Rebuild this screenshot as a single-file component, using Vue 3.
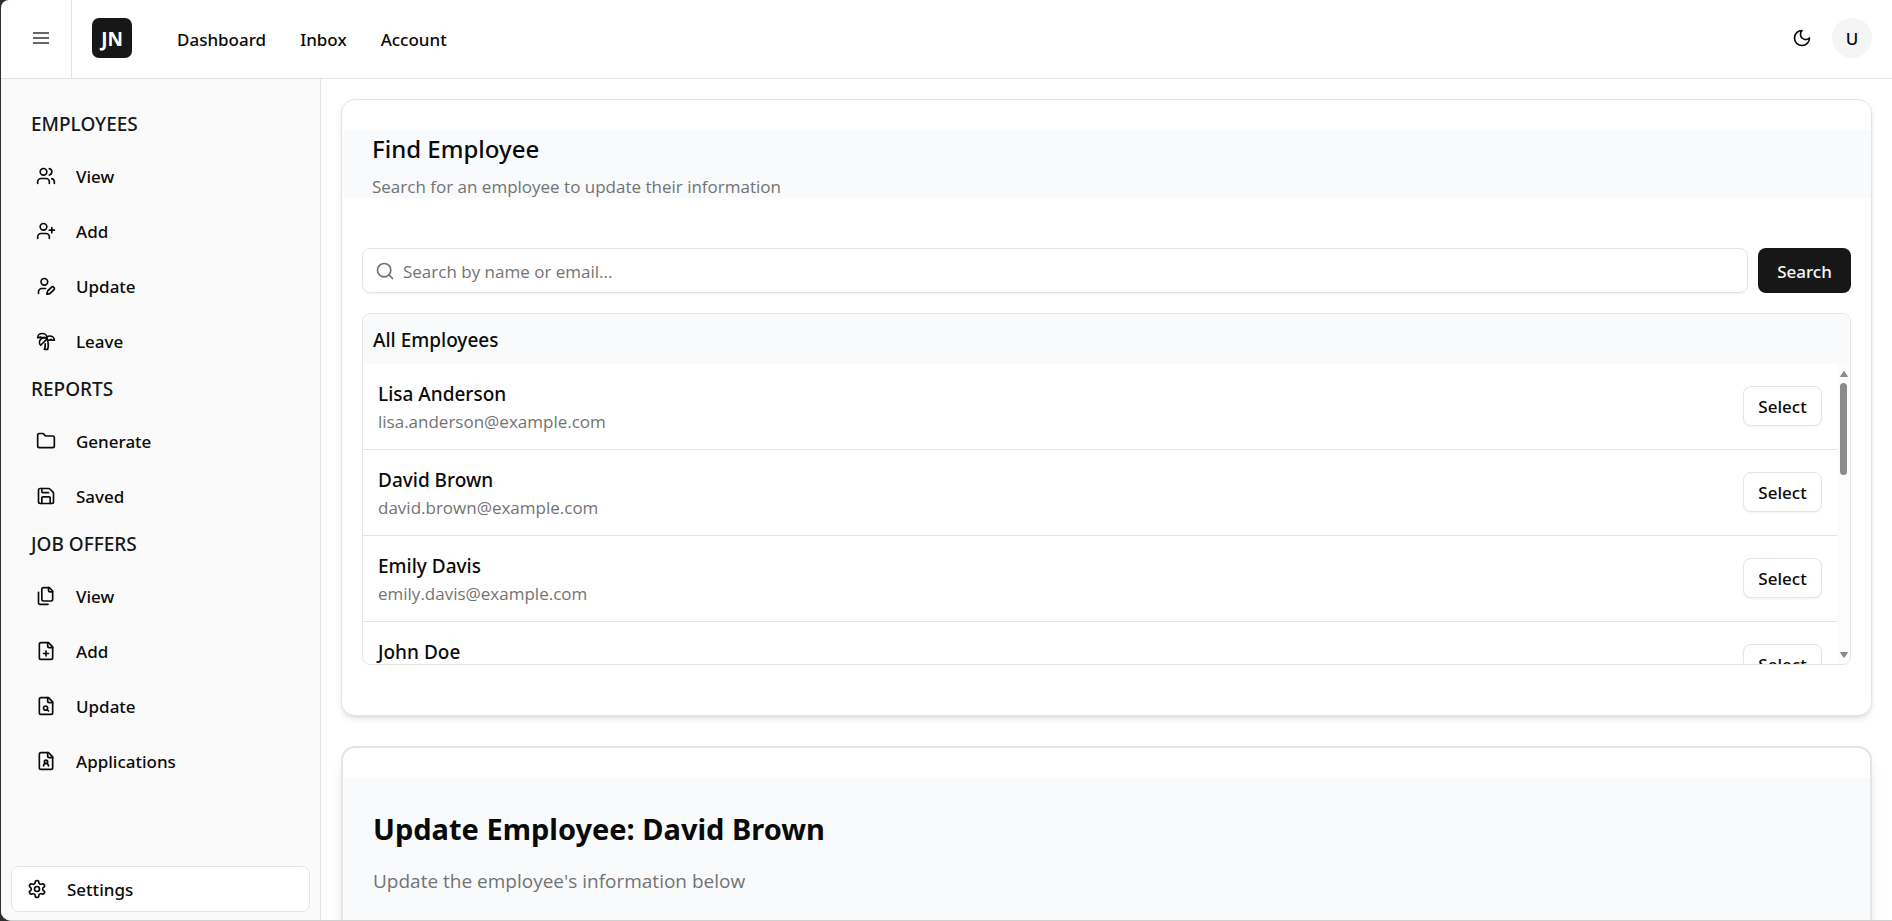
<script setup>
import { ref } from 'vue'

const query = ref('')

const navLinks = ['Dashboard', 'Inbox', 'Account']

const page = [
  'M15 2H6a2 2 0 0 0-2 2v16a2 2 0 0 0 2 2h12a2 2 0 0 0 2-2V7Z',
  'M14 2v4a2 2 0 0 0 2 2h4',
]

const groups = [
  {
    title: 'EMPLOYEES',
    items: [
      {
        label: 'View',
        paths: [
          'M16 21v-2a4 4 0 0 0-4-4H6a4 4 0 0 0-4 4v2',
          'M5 7a4 4 0 1 0 8 0a4 4 0 1 0-8 0',
          'M22 21v-2a4 4 0 0 0-3-3.87',
          'M16 3.13a4 4 0 0 1 0 7.75',
        ],
      },
      {
        label: 'Add',
        paths: [
          'M16 21v-2a4 4 0 0 0-4-4H6a4 4 0 0 0-4 4v2',
          'M5 7a4 4 0 1 0 8 0a4 4 0 1 0-8 0',
          'M19 8v6',
          'M22 11h-6',
        ],
      },
      {
        label: 'Update',
        paths: [
          'M11.5 15H7a4 4 0 0 0-4 4v2',
          'M21.378 16.626a1 1 0 0 0-3.004-3.004l-4.01 4.012a2 2 0 0 0-.506.854l-.837 2.87a.5.5 0 0 0 .62.62l2.87-.837a2 2 0 0 0 .854-.506z',
          'M6 7a4 4 0 1 0 8 0a4 4 0 1 0-8 0',
        ],
      },
      {
        label: 'Leave',
        paths: [
          'M13 8c0-2.76-2.46-5-5.5-5S2 5.24 2 8h2l1-1 1 1h4',
          'M13 7.14A5.82 5.82 0 0 1 16.5 6c3.04 0 5.5 2.24 5.5 5h-3l-1-1-1 1h-3',
          'M5.89 9.71c-2.15 2.15-2.3 5.47-.35 7.43l4.24-4.25.7-.7.71-.71 2.12-2.12c-1.95-1.96-5.27-1.8-7.42.35',
          'M11 15.5c.5 2.5-.17 4.5-1 6.5h4c2-5.5-.5-12-1-14',
        ],
      },
    ],
  },
  {
    title: 'REPORTS',
    items: [
      {
        label: 'Generate',
        paths: [
          'M20 20a2 2 0 0 0 2-2V8a2 2 0 0 0-2-2h-7.900a2 2 0 0 1-1.690-.900L9.600 3.900A2 2 0 0 0 7.930 3H4a2 2 0 0 0-2 2v13a2 2 0 0 0 2 2Z',
        ],
      },
      {
        label: 'Saved',
        paths: [
          'M15.200 3a2 2 0 0 1 1.400.600l3.800 3.800a2 2 0 0 1 .600 1.400V19a2 2 0 0 1-2 2H5a2 2 0 0 1-2-2V5a2 2 0 0 1 2-2z',
          'M17 21v-7a1 1 0 0 0-1-1H8a1 1 0 0 0-1 1v7',
          'M7 3v4a1 1 0 0 0 1 1h7',
        ],
      },
    ],
  },
  {
    title: 'JOB OFFERS',
    items: [
      {
        label: 'View',
        paths: [
          'M20 7h-3a2 2 0 0 1-2-2V2',
          'M9 18a2 2 0 0 1-2-2V4a2 2 0 0 1 2-2h7l4 4v10a2 2 0 0 1-2 2Z',
          'M3 7.600v12.800A1.600 1.600 0 0 0 4.600 22h9.800',
        ],
      },
      { label: 'Add', paths: [...page, 'M9 15h6', 'M12 18v-6'] },
      {
        label: 'Update',
        paths: [...page, 'M9 14.500a2.500 2.500 0 1 0 5 0a2.500 2.500 0 1 0-5 0', 'M13.300 16.300L15 18'],
      },
      {
        label: 'Applications',
        paths: [...page, 'M10 13a2 2 0 1 0 4 0a2 2 0 1 0-4 0', 'M15 18a3 3 0 1 0-6 0'],
      },
    ],
  },
]

const employees = [
  { name: 'Lisa Anderson', email: 'lisa.anderson@example.com' },
  { name: 'David Brown', email: 'david.brown@example.com' },
  { name: 'Emily Davis', email: 'emily.davis@example.com' },
  { name: 'John Doe', email: 'john.doe@example.com' },
]
</script>

<template>
  <div class="shell">
    <header class="topbar">
      <button class="menu" type="button" aria-label="Toggle menu">
        <svg class="icon" viewBox="0 0 20 20"><path d="M2 5h16M2 10h16M2 15h16" /></svg>
      </button>
      <a class="logo" href="#">JN</a>
      <nav class="links">
        <a v-for="link in navLinks" :key="link" href="#">{{ link }}</a>
      </nav>
      <button class="theme" type="button" aria-label="Toggle theme">
        <svg class="icon" viewBox="0 0 24 24"><path d="M12 3a6 6 0 0 0 9 9 9 9 0 1 1-9-9Z" /></svg>
      </button>
      <button class="avatar" type="button">U</button>
    </header>

    <div class="body">
      <aside class="sidebar">
        <nav>
          <section v-for="group in groups" :key="group.title">
            <h2 class="group-title">{{ group.title }}</h2>
            <a v-for="item in group.items" :key="item.label" class="item" href="#">
              <svg class="icon" viewBox="0 0 24 24">
                <path v-for="d in item.paths" :key="d" :d="d" />
              </svg>
              <span>{{ item.label }}</span>
            </a>
          </section>
        </nav>
        <a class="settings" href="#">
          <svg class="icon" viewBox="0 0 24 24">
            <path d="M12.220 2h-.440a2 2 0 0 0-2 2v.180a2 2 0 0 1-1 1.730l-.430.250a2 2 0 0 1-2 0l-.150-.080a2 2 0 0 0-2.730.730l-.220.380a2 2 0 0 0 .730 2.730l.150.100a2 2 0 0 1 1 1.720v.510a2 2 0 0 1-1 1.740l-.150.090a2 2 0 0 0-.730 2.730l.220.380a2 2 0 0 0 2.730.730l.150-.080a2 2 0 0 1 2 0l.430.250a2 2 0 0 1 1 1.730V20a2 2 0 0 0 2 2h.440a2 2 0 0 0 2-2v-.180a2 2 0 0 1 1-1.730l.430-.250a2 2 0 0 1 2 0l.150.080a2 2 0 0 0 2.730-.730l.220-.390a2 2 0 0 0-.730-2.730l-.150-.080a2 2 0 0 1-1-1.740v-.500a2 2 0 0 1 1-1.740l.150-.090a2 2 0 0 0 .730-2.730l-.220-.380a2 2 0 0 0-2.730-.730l-.150.080a2 2 0 0 1-2 0l-.430-.250a2 2 0 0 1-1-1.730V4a2 2 0 0 0-2-2z" />
            <circle cx="12" cy="12" r="3" />
          </svg>
          <span>Settings</span>
        </a>
      </aside>

      <main class="content">
        <section class="card">
          <div class="card-head">
            <h1 class="find-title">Find Employee</h1>
            <p class="find-sub">Search for an employee to update their information</p>
          </div>
          <div class="card-body">
            <form class="search" @submit.prevent>
              <label class="field">
                <svg class="icon" viewBox="0 0 24 24">
                  <circle cx="11" cy="11" r="8" />
                  <path d="m21 21-4.300-4.300" />
                </svg>
                <input v-model="query" type="text" aria-label="Search employees" placeholder="Search by name or email..." />
              </label>
              <button class="primary" type="submit">Search</button>
            </form>
            <div class="list">
              <h2 class="list-title">All Employees</h2>
              <div class="viewport">
                <ul class="rows">
                  <li v-for="person in employees" :key="person.email" class="row">
                    <div>
                      <div class="name">{{ person.name }}</div>
                      <div class="email">{{ person.email }}</div>
                    </div>
                    <button class="select" type="button">Select</button>
                  </li>
                </ul>
                <div class="scrollbar" aria-hidden="true">
                  <svg class="arrow" viewBox="0 0 8 6"><path d="M4 0.500 7.500 5.500H0.500Z" /></svg>
                  <div class="thumb"></div>
                  <svg class="arrow end" viewBox="0 0 8 6"><path d="M4 5.500 7.500 0.500H0.500Z" /></svg>
                </div>
              </div>
            </div>
          </div>
        </section>

        <section class="card update">
          <div class="update-head">
            <h1 class="update-title">Update Employee: David Brown</h1>
            <p class="update-sub">Update the employee's information below</p>
          </div>
        </section>
      </main>
    </div>
  </div>
</template>

<style>
body {
  margin: 0;
  background: #2f2f31;
}
</style>

<style scoped>
* {
  box-sizing: border-box;
}
.shell {
  height: 100vh;
  margin-left: 1px;
  display: flex;
  flex-direction: column;
  overflow: hidden;
  background: #fff;
  border-bottom: 1px solid #cfcfcf;
  border-radius: 8px 0 0 10px;
  color: #0a0a0a;
  font-family: "Noto Sans", "Open Sans", sans-serif;
  font-size: 17px;
  line-height: 26px;
}
h1, h2, p, ul {
  margin: 0;
  padding: 0;
  font-weight: 500;
}
a {
  color: inherit;
  text-decoration: none;
}
button {
  font: inherit;
  color: inherit;
  border: 0;
  padding: 0;
  background: none;
}
.icon {
  flex: none;
  width: 20px;
  height: 20px;
  fill: none;
  stroke: currentColor;
  stroke-width: 2;
  stroke-linecap: round;
  stroke-linejoin: round;
}

.topbar {
  flex: none;
  height: 79px;
  display: flex;
  align-items: center;
  padding: 0 20px 2px 0;
  border-bottom: 1px solid #e5e5e5;
  font-weight: 500;
}
.menu {
  width: 71px;
  height: 78px;
  margin-bottom: -2px;
  padding: 0 12px 2px 22px;
  display: flex;
  align-items: center;
  justify-content: center;
  border-right: 1px solid #e5e5e5;
  color: #666;
}
.menu .icon {
  stroke-linecap: butt;
}
.logo {
  width: 40px;
  height: 40px;
  margin-left: 20px;
  border-radius: 7px;
  background: #171717;
  color: #fff;
  font-size: 19px;
  font-weight: 700;
  line-height: 42px;
  text-align: center;
}
.links {
  display: flex;
  gap: 34px;
  margin-left: 45px;
  padding-top: 3px;
  flex: 1;
}
.theme {
  display: flex;
  margin-right: 20px;
}
.avatar {
  width: 40px;
  height: 40px;
  padding-top: 2px;
  border-radius: 50%;
  background: #f5f5f5;
}

.body {
  flex: 1;
  min-height: 0;
  display: flex;
}
.sidebar {
  flex: none;
  width: 320px;
  display: flex;
  flex-direction: column;
  justify-content: space-between;
  padding: 24px 10px 8px;
  border-right: 1px solid #e5e5e5;
  background: #fafafa;
  font-weight: 500;
}
.group-title {
  height: 45px;
  padding-left: 20px;
  font-size: 19px;
  line-height: 42px;
  color: #171717;
}
.item {
  display: flex;
  align-items: center;
  gap: 20px;
  height: 55px;
  padding-left: 25px;
}
.item span,
.settings span {
  padding-top: 2px;
}
.settings {
  display: flex;
  align-items: center;
  gap: 20px;
  height: 46px;
  padding-left: 15px;
  background: #fff;
  border: 1px solid #e5e5e5;
  border-radius: 8px;
}

.content {
  flex: 1;
  min-width: 0;
  padding: 20px;
  overflow: hidden;
  display: flex;
  flex-direction: column;
  gap: 30px;
}
.card {
  flex: none;
  padding: 30px 0;
  border: 1px solid #e5e5e5;
  border-radius: 14px;
  background: #fff;
  box-shadow: 0 4px 6px -1px rgb(0 0 0 / 0.1), 0 2px 4px -2px rgb(0 0 0 / 0.1);
}
.card-head {
  height: 68px;
  padding: 3px 30px 0;
  background: #f8fafc;
}
.find-title {
  font-size: 24px;
  line-height: 32px;
}
.find-sub,
.field input,
.email,
.update-sub {
  font-family: "Open Sans", "Noto Sans", sans-serif;
  font-weight: 400;
}
.find-sub {
  margin-top: 9px;
  line-height: 26px;
  color: #737373;
}
.card-body {
  padding: 50px 20px 20px;
}
.search {
  display: flex;
  gap: 10px;
  margin-bottom: 20px;
}
.field {
  flex: 1;
  display: flex;
  align-items: center;
  gap: 8px;
  height: 45px;
  padding: 0 12px;
  border: 1px solid #e5e5e5;
  border-radius: 8px;
  box-shadow: 0 1px 2px rgb(0 0 0 / 0.05);
  color: #737373;
}
.field input {
  flex: 1;
  min-width: 0;
  padding: 2px 0 0;
  border: 0;
  outline: 0;
  background: none;
  font-size: 17px;
  line-height: 26px;
  color: #0a0a0a;
}
.field input::placeholder {
  color: #737373;
  opacity: 1;
}
.primary {
  width: 93px;
  height: 45px;
  padding-top: 2px;
  border-radius: 8px;
  background: #171717;
  color: #fafafa;
  font-weight: 500;
}
.list {
  border: 1px solid #e5e5e5;
  border-radius: 8px;
  overflow: hidden;
}
.list-title {
  height: 50px;
  padding: 0 10px;
  background: #f8fafc;
  font-size: 19px;
  line-height: 52px;
}
.viewport {
  display: flex;
  height: 300px;
}
.rows {
  flex: 1;
  overflow-y: auto;
  scrollbar-width: none;
  list-style: none;
}
.row {
  display: flex;
  align-items: center;
  justify-content: space-between;
  height: 86px;
  padding: 0 15px 1px;
  border-bottom: 1px solid #e5e5e5;
}
.name {
  padding-top: 4px;
  font-size: 19px;
  font-weight: 500;
  line-height: 28px;
}
.email {
  line-height: 28px;
  color: #737373;
}
.select {
  width: 79px;
  height: 40px;
  padding-top: 2px;
  border: 1px solid #e5e5e5;
  border-radius: 8px;
  background: #fff;
  box-shadow: 0 1px 2px rgb(0 0 0 / 0.05);
  font-weight: 500;
}
.scrollbar {
  width: 13px;
  display: flex;
  flex-direction: column;
  align-items: center;
  gap: 6px;
  padding: 7px 0 6px;
  background: #fcfcfc;
}
.arrow {
  width: 8px;
  height: 6px;
  fill: #8b8b8b;
  stroke: #8b8b8b;
  stroke-linejoin: round;
}
.arrow.end {
  margin-top: auto;
}
.thumb {
  width: 7px;
  height: 92px;
  border-radius: 4px;
  background: #8b8b8b;
}

.update {
  border-width: 2px;
  box-shadow: 0 10px 15px -3px rgb(0 0 0 / 0.1), 0 4px 6px -4px rgb(0 0 0 / 0.1);
}
.update-head {
  padding: 30px 30px 26px;
  background: #f8fafc;
}
.update-title {
  font-size: 29px;
  font-weight: 700;
  line-height: 42px;
}
.update-sub {
  margin-top: 17px;
  font-size: 19px;
  line-height: 28px;
  color: #737373;
}
</style>
